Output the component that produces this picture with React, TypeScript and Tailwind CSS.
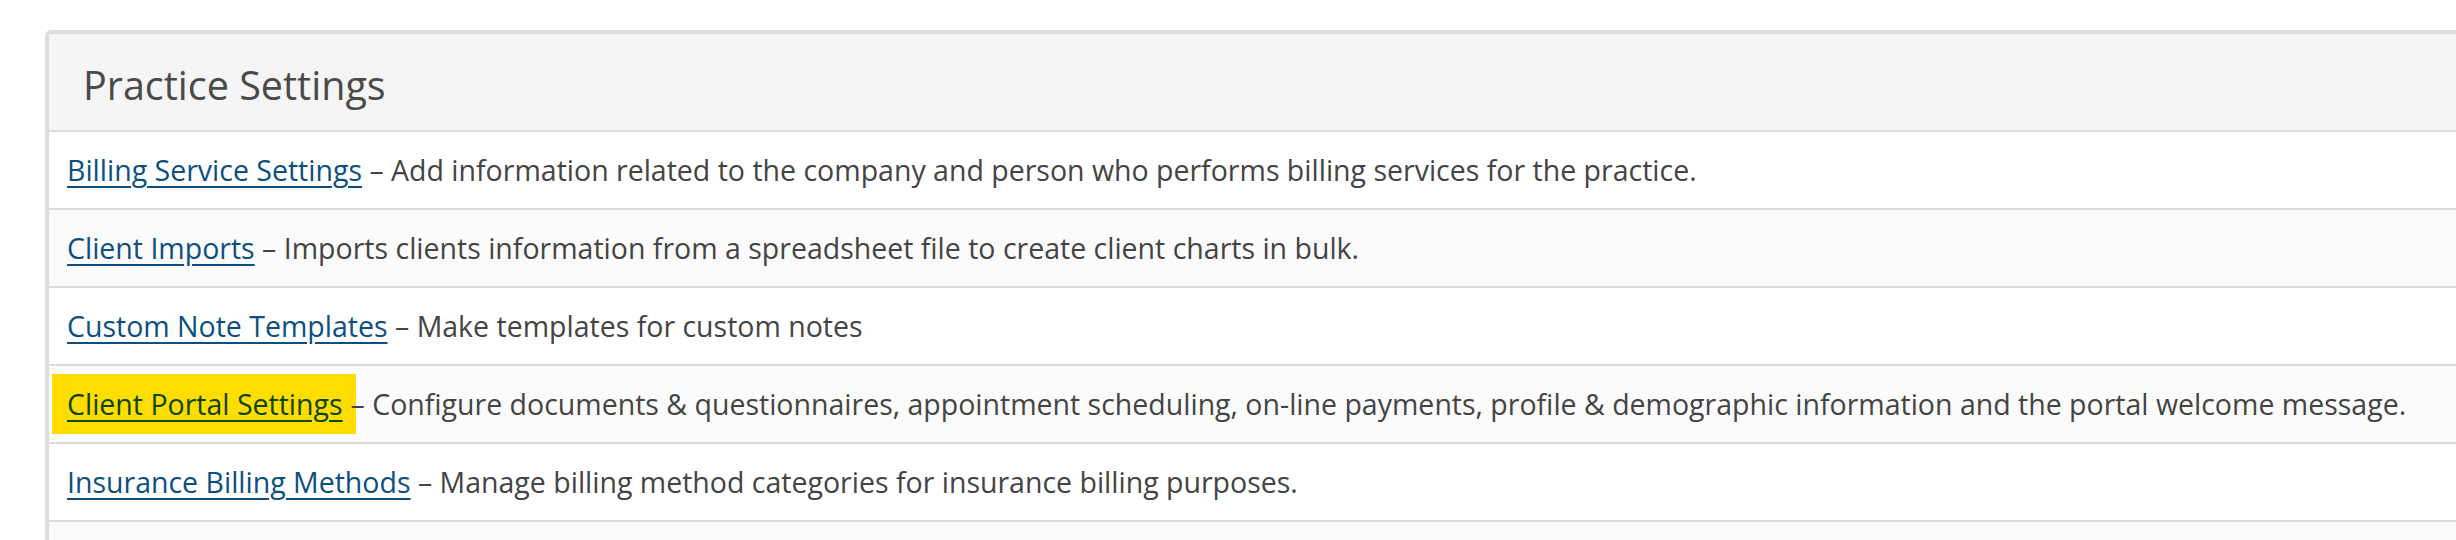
const settings = [
  {
    label: "Billing Service Settings",
    text: "Add information related to the company and person who performs billing services for the practice.",
  },
  {
    label: "Client Imports",
    text: "Imports clients information from a spreadsheet file to create client charts in bulk.",
  },
  {
    label: "Custom Note Templates",
    text: "Make templates for custom notes",
  },
  {
    label: "Client Portal Settings",
    text: "Configure documents & questionnaires, appointment scheduling, on-line payments, profile & demographic information and the portal welcome message.",
    highlight: true,
  },
  {
    label: "Insurance Billing Methods",
    text: "Manage billing method categories for insurance billing purposes.",
  },
];

export default function App() {
  return (
    <div
      className="min-h-[540px] bg-white pl-[45px] pt-[30px]"
      style={{ fontFamily: '"Open Sans", "Liberation Sans", sans-serif' }}
    >
      <div className="rounded-tl-md border-l-4 border-t-4 border-[#dddddd]">
        <div className="border-b-2 border-[#dddddd] bg-[#f5f5f5] pb-[22px] pt-[28px] pl-[34px] text-[39.5px] leading-[46px] text-[#4a4a4a]">
          Practice Settings
        </div>

        {settings.map((s, i) => (
          <div
            key={s.label}
            className={`border-b-2 border-[#dddddd] py-[19px] pl-[18px] text-[28.5px] leading-[38px] text-[#444444] ${
              i % 2 === 1 ? "bg-[#fbfbfb]" : "bg-white"
            }`}
          >
            {s.highlight ? (
              <>
                {/* highlighted entry: yellow marker box runs just past the link */}
                <span className="-my-[11px] -ml-[15px] inline-block bg-[#ffdd00] py-[11px] pl-[15px] pr-[13px]">
                  <a href="#" className="text-[#0c4400] underline underline-offset-[5px]">
                    {s.label}
                  </a>
                </span>
                <span className="-ml-[5px]">– {s.text}</span>
              </>
            ) : (
              <>
                <a href="#" className="text-[#0c4f80] underline underline-offset-[5px]">
                  {s.label}
                </a>{" "}
                – {s.text}
              </>
            )}
          </div>
        ))}
        <div className="h-[20px] bg-[#fbfbfb]" />
      </div>
    </div>
  );
}
